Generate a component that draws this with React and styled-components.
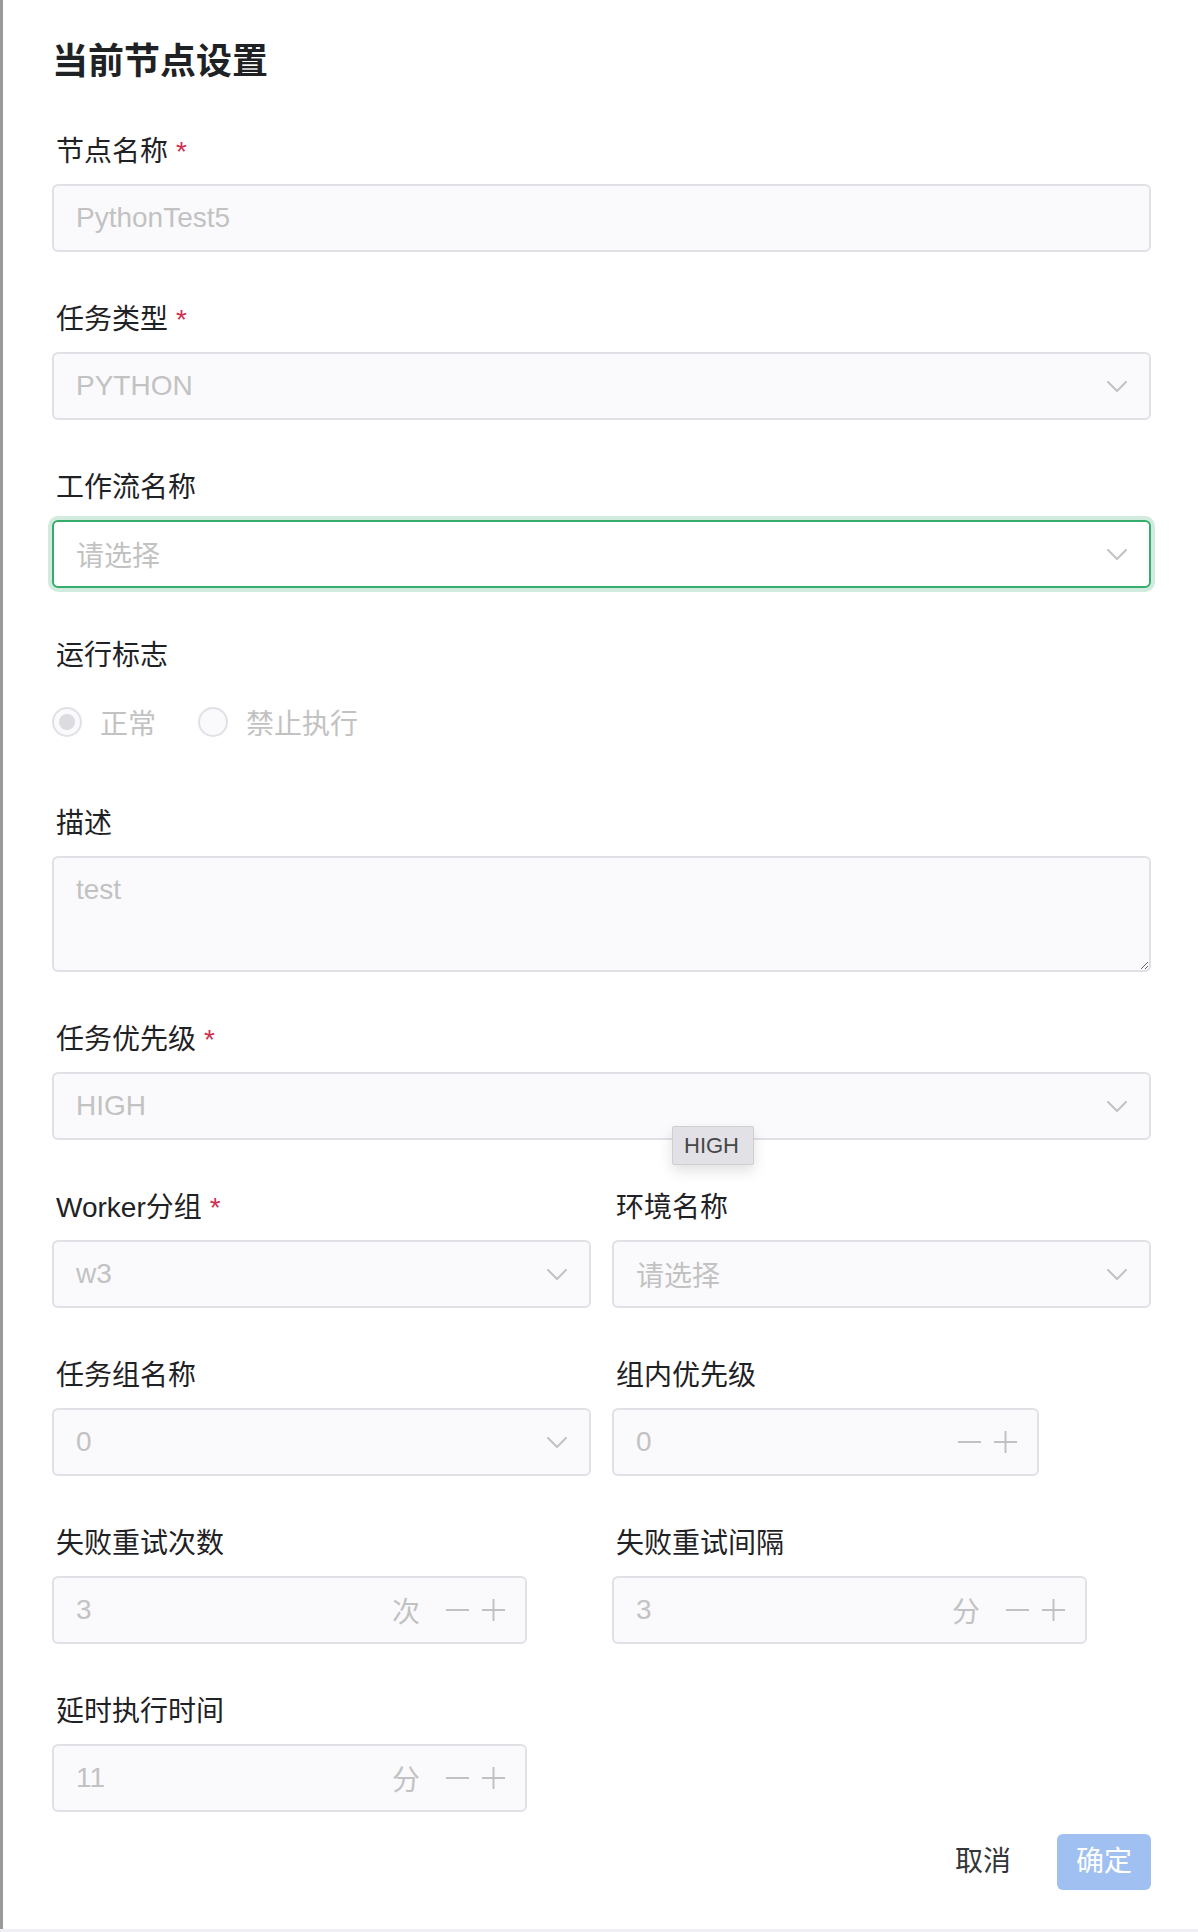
import React from "react";
import styled, { createGlobalStyle, css } from "styled-components";

const GlobalStyle = createGlobalStyle`
  html, body {
    margin: 0;
    padding: 0;
  }
  body {
    background: #efeff5;
    font-family: "Liberation Sans", "Noto Sans CJK SC", sans-serif;
    -webkit-font-smoothing: antialiased;
  }
`;

const Drawer = styled.div`
  height: 1929px;
  display: flex;
  flex-direction: column;
  box-sizing: border-box;
  background: #fff;
  border-left: 3px solid #9a9a9a;
`;

const Body = styled.div`
  flex: 1;
  min-height: 0;
  overflow: hidden;
  padding: 38px 47px 0 49px;
`;

const Title = styled.h2`
  margin: 0 0 48px;
  font-size: 36px;
  line-height: 48px;
  font-weight: 700;
  color: #1f2225;
`;

const FormItem = styled.div`
  padding-bottom: 50px;
`;

const Label = styled.div`
  padding: 0 0 14px 4px;
  font-size: 28px;
  line-height: 36px;
  color: #1f2225;
`;

const Required = styled.span`
  margin-left: 8px;
  color: #d03050;
`;

const Control = styled.div`
  position: relative;
`;

const Row = styled.div`
  display: grid;
  grid-template-columns: 1fr 1fr;
  column-gap: 21px;
`;

const fieldBox = css`
  box-sizing: border-box;
  height: 68px;
  display: flex;
  align-items: center;
  border: 2px solid ${(p) => (p.$focused ? "#36ad6a" : "#e0e0e6")};
  border-radius: 6px;
  background: ${(p) => (p.$focused ? "#fff" : "#fafafc")};
  box-shadow: ${(p) => (p.$focused ? "0 0 0 4px rgba(24, 160, 88, 0.2)" : "none")};
  font-size: 28px;
  color: #c2c2c2;
`;

const InputBox = styled.div`
  ${fieldBox};
  padding: 0 20px 0 22px;
`;

const SelectBox = styled.div`
  ${fieldBox};
  padding: 0 16px 0 22px;
`;

const NumberBox = styled.div`
  ${fieldBox};
  width: ${(p) => p.$width}px;
  padding: 0 20px 0 22px;
`;

const Value = styled.div`
  flex: 1;
  white-space: nowrap;
`;

const Suffix = styled.span`
  margin-right: 26px;
`;

const Steppers = styled.div`
  display: flex;
  align-items: center;
  gap: 13px;
`;

const TextArea = styled.textarea`
  display: block;
  box-sizing: border-box;
  width: 100%;
  height: 116px;
  margin: 0;
  padding: 10px 22px;
  border: 2px solid #e0e0e6;
  border-radius: 6px;
  background: #fafafc;
  color: #c2c2c2;
  font-family: inherit;
  font-size: 28px;
  line-height: 44px;
  resize: vertical;
  outline: none;
`;

const RadioGroup = styled.div`
  height: 68px;
  display: flex;
  align-items: center;
  gap: 42px;
`;

const RadioItem = styled.div`
  display: flex;
  align-items: center;
  gap: 18px;
  font-size: 28px;
  color: #c2c2c2;
`;

const RadioDot = styled.span`
  box-sizing: border-box;
  width: 30px;
  height: 30px;
  border-radius: 50%;
  border: 2px solid #e0e0e6;
  background: #fafafc;
  display: flex;
  align-items: center;
  justify-content: center;

  &::after {
    content: "";
    width: 16px;
    height: 16px;
    border-radius: 50%;
    background: ${(p) => (p.$checked ? "#dcdce0" : "transparent")};
  }
`;

const Tooltip = styled.div`
  position: absolute;
  left: 620px;
  top: 54px;
  box-sizing: border-box;
  width: 82px;
  height: 39px;
  display: flex;
  align-items: center;
  padding-left: 11px;
  background: #e2e1e6;
  border: 1px solid #cfced3;
  border-radius: 2px;
  box-shadow: 0 6px 14px rgba(0, 0, 0, 0.12);
  font-family: "Liberation Sans", sans-serif;
  font-size: 22px;
  color: #474747;
`;

const Footer = styled.div`
  display: flex;
  justify-content: flex-end;
  align-items: flex-start;
  gap: 27px;
  padding: 20px 47px 39px 0;
`;

const Button = styled.button`
  height: 56px;
  padding: 0 19px;
  border: none;
  border-radius: 6px;
  font-family: inherit;
  font-size: 28px;
  line-height: 56px;
  background: ${(p) => (p.$primary ? "#a0c0f2" : "transparent")};
  color: ${(p) => (p.$primary ? "#fff" : "#333639")};
`;

const ChevronDown = () => (
  <svg width="32" height="32" viewBox="0 0 16 16" fill="#c2c2c2">
    <path d="M3.14645 5.64645C3.34171 5.45118 3.65829 5.45118 3.85355 5.64645L8 9.79289L12.1464 5.64645C12.3417 5.45118 12.6583 5.45118 12.8536 5.64645C13.0488 5.84171 13.0488 6.15829 12.8536 6.35355L8.35355 10.8536C8.15829 11.0488 7.84171 11.0488 7.64645 10.8536L3.14645 6.35355C2.95118 6.15829 2.95118 5.84171 3.14645 5.64645Z" />
  </svg>
);

const Minus = () => (
  <svg width="23" height="22" viewBox="0 0 23 22" stroke="#c2c2c2" strokeWidth="2">
    <line x1="0" y1="11" x2="23" y2="11" />
  </svg>
);

const Plus = () => (
  <svg width="23" height="22" viewBox="0 0 23 22" stroke="#c2c2c2" strokeWidth="2">
    <line x1="0" y1="11" x2="23" y2="11" />
    <line x1="11.5" y1="0" x2="11.5" y2="22" />
  </svg>
);

const Field = ({ label, required, children }) => (
  <FormItem>
    <Label>
      {label}
      {required && <Required>*</Required>}
    </Label>
    <Control>{children}</Control>
  </FormItem>
);

const Select = ({ value, focused }) => (
  <SelectBox $focused={focused}>
    <Value>{value}</Value>
    <ChevronDown />
  </SelectBox>
);

const InputNumber = ({ value, suffix, width }) => (
  <NumberBox $width={width}>
    <Value>{value}</Value>
    {suffix && <Suffix>{suffix}</Suffix>}
    <Steppers>
      <Minus />
      <Plus />
    </Steppers>
  </NumberBox>
);

export default function App() {
  return (
    <>
      <GlobalStyle />
      <Drawer>
        <Body>
          <Title>当前节点设置</Title>

          <Field label="节点名称" required>
            <InputBox>
              <Value>PythonTest5</Value>
            </InputBox>
          </Field>

          <Field label="任务类型" required>
            <Select value="PYTHON" />
          </Field>

          <Field label="工作流名称">
            <Select value="请选择" focused />
          </Field>

          <Field label="运行标志">
            <RadioGroup>
              <RadioItem>
                <RadioDot $checked />
                正常
              </RadioItem>
              <RadioItem>
                <RadioDot />
                禁止执行
              </RadioItem>
            </RadioGroup>
          </Field>

          <Field label="描述">
            <TextArea readOnly value="test" />
          </Field>

          <Field label="任务优先级" required>
            <Select value="HIGH" />
            <Tooltip>HIGH</Tooltip>
          </Field>

          <Row>
            <Field label="Worker分组" required>
              <Select value="w3" />
            </Field>
            <Field label="环境名称">
              <Select value="请选择" />
            </Field>
          </Row>

          <Row>
            <Field label="任务组名称">
              <Select value="0" />
            </Field>
            <Field label="组内优先级">
              <InputNumber value="0" width={427} />
            </Field>
          </Row>

          <Row>
            <Field label="失败重试次数">
              <InputNumber value="3" suffix="次" width={475} />
            </Field>
            <Field label="失败重试间隔">
              <InputNumber value="3" suffix="分" width={475} />
            </Field>
          </Row>

          <Field label="延时执行时间">
            <InputNumber value="11" suffix="分" width={475} />
          </Field>
        </Body>

        <Footer>
          <Button>取消</Button>
          <Button $primary>确定</Button>
        </Footer>
      </Drawer>
    </>
  );
}
